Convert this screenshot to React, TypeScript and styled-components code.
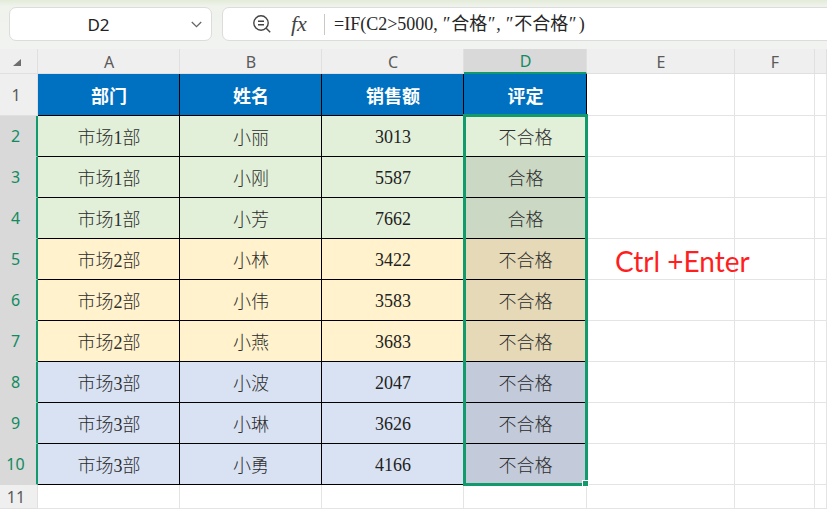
import * as React from 'react';
import { createGlobalStyle, styled } from 'styled-components';

const GlobalStyle = createGlobalStyle`
  html, body {
    margin: 0;
    padding: 0;
    height: 100%;
    overflow: hidden;
    background: #fff;
  }
`;

const Page = styled.div`
  width: 827px;
  height: 509px;
  overflow: hidden;
  display: flex;
  flex-direction: column;
  background: #fff;
`;

const Toolbar = styled.div`
  height: 49px;
  box-sizing: border-box;
  flex: none;
  display: flex;
  gap: 10px;
  padding: 7px 0 0 9px;
  background: linear-gradient(#e3ebd8 0, #eff3ec 6px, #f1f3f0 100%);
`;

const NameBox = styled.div`
  width: 203px;
  height: 34px;
  box-sizing: border-box;
  flex: none;
  display: flex;
  align-items: center;
  padding: 0 9px 0 0;
  background: #fff;
  border: 1px solid #dcdcdc;
  border-radius: 7px;
`;

const CellName = styled.span`
  flex: 1;
  text-align: center;
  padding-right: 4px;
  font: 400 17px 'Noto Sans', sans-serif;
  color: #222;
`;

const FormulaBox = styled.div`
  flex: 1;
  height: 34px;
  box-sizing: border-box;
  margin-right: -10px;
  display: flex;
  align-items: center;
  padding-left: 29px;
  background: #fff;
  border: 1px solid #dcdcdc;
  border-radius: 7px;
`;

const FxLabel = styled.span`
  margin-left: 19px;
  width: 20px;
  font: italic 400 22px 'Liberation Serif', serif;
  color: #444;
`;

const Divider = styled.span`
  width: 1px;
  height: 21px;
  margin: 0 9px 0 13px;
  background: #c8c8c8;
`;

const FormulaText = styled.span`
  font: 400 18px 'Liberation Serif', 'Noto Sans CJK SC', serif;
  color: #262626;
  white-space: nowrap;
  position: relative;
  top: -2px;
`;

const HalfWidth = styled.span`
  display: inline-block;
  width: 9px;
  text-align: center;
`;

const Comma = styled(HalfWidth)`
  text-align: left;
`;

const Sheet = styled.div`
  position: relative;
  display: grid;
  grid-template-columns: 38px 142px 142px 142px 123px 148px 80px 12px;
  grid-template-rows: 25px 42px repeat(9, 41px) 24px;
`;

const ColumnHead = styled.div<{ $active?: boolean }>`
  box-sizing: border-box;
  display: flex;
  align-items: center;
  justify-content: center;
  padding: 1px 0 0 1px;
  font: 400 16px 'Noto Sans', sans-serif;
  background: ${(p) => (p.$active ? '#d9d9d9' : '#efefef')};
  color: ${(p) => (p.$active ? '#128a60' : '#5a5a5a')};
  border-right: 1px solid #e0e0e0;
  border-bottom: ${(p) => (p.$active ? '2px solid #119a6c' : '1px solid #e0e0e0')};
`;

const Corner = styled(ColumnHead)`
  padding: 3px 0 0 0;
  justify-content: flex-start;
`;

const CornerMark = styled.span`
  margin-left: 13px;
  width: 0;
  height: 0;
  border-style: solid;
  border-width: 0 0 7px 8px;
  border-color: transparent transparent #6e6e6e transparent;
`;

const RowHead = styled.div<{ $active?: boolean }>`
  box-sizing: border-box;
  display: flex;
  align-items: center;
  justify-content: center;
  padding-right: 5px;
  font: 400 16px 'Noto Sans', sans-serif;
  background: ${(p) => (p.$active ? '#d9d9d9' : '#efefef')};
  color: ${(p) => (p.$active ? '#128a60' : '#5a5a5a')};
  border-right: ${(p) => (p.$active ? '2px solid #119a6c' : '1px solid #e0e0e0')};
  border-bottom: 1px solid ${(p) => (p.$active ? '#d9d9d9' : '#e0e0e0')};
`;

const Blank = styled.div`
  box-sizing: border-box;
  background: #fff;
  border-right: 1px solid #e4e4e4;
  border-bottom: 1px solid #e4e4e4;
`;

const Cell = styled.div<{ $bg: string }>`
  box-sizing: border-box;
  display: flex;
  align-items: center;
  justify-content: center;
  padding-left: 1px;
  font: 300 18px 'Liberation Serif', 'Noto Sans CJK SC', serif;
  color: #2c2c2c;
  background: ${(p) => p.$bg};
  border-right: 1px solid #000;
  border-bottom: 1px solid #000;
`;

const NumberCell = styled(Cell)`
  padding-top: 3px;
  color: #222;
`;

const HeaderCell = styled(Cell)`
  font: 700 18px 'Liberation Serif', 'Noto Sans CJK SC', serif;
  color: #fff;
`;

const Note = styled.div`
  position: absolute;
  left: 615px;
  top: 195px;
  font: 400 28px 'Lato', sans-serif;
  color: #ff1f1f;
  white-space: nowrap;
`;

const Selection = styled.div`
  position: absolute;
  left: 463px;
  top: 65px;
  width: 125px;
  height: 372px;
  box-sizing: border-box;
  border: 3px solid #119a6c;
  pointer-events: none;
`;

const FillHandle = styled.div`
  position: absolute;
  right: -4px;
  bottom: -4px;
  width: 7px;
  height: 7px;
  box-sizing: border-box;
  background: #119a6c;
  border: 1px solid #fff;
`;

const rows = [
  ['市场1部', '小丽', '3013', '不合格'],
  ['市场1部', '小刚', '5587', '合格'],
  ['市场1部', '小芳', '7662', '合格'],
  ['市场2部', '小林', '3422', '不合格'],
  ['市场2部', '小伟', '3583', '不合格'],
  ['市场2部', '小燕', '3683', '不合格'],
  ['市场3部', '小波', '2047', '不合格'],
  ['市场3部', '小琳', '3626', '不合格'],
  ['市场3部', '小勇', '4166', '不合格'],
];

const tints = [
  { base: '#e2f0d9', selected: '#cbd8c3' },
  { base: '#fff2cc', selected: '#e5d9b7' },
  { base: '#d9e2f3', selected: '#c3cbda' },
];

const LookupIcon = () => (
  <svg width="20" height="20" viewBox="0 0 20 20" fill="none" stroke="#444" strokeWidth="1.4">
    <circle cx="9" cy="9" r="7.2" />
    <path d="M6 7.2h6M6 10.8h6M14.2 14.2l4 4" />
  </svg>
);

const Chevron = () => (
  <svg width="11" height="7" viewBox="0 0 11 7" fill="none" stroke="#666" strokeWidth="1.3">
    <path d="M.8 1l4.7 4.6L10.2 1" />
  </svg>
);

export default function App() {
  return (
    <Page>
      <GlobalStyle />
      <Toolbar>
        <NameBox>
          <CellName>D2</CellName>
          <Chevron />
        </NameBox>
        <FormulaBox>
          <LookupIcon />
          <FxLabel>fx</FxLabel>
          <Divider />
          <FormulaText>
            =IF(C2&gt;5000<Comma>,</Comma>
            <HalfWidth>″</HalfWidth>合格<HalfWidth>″</HalfWidth>
            <Comma>,</Comma>
            <HalfWidth>″</HalfWidth>不合格<HalfWidth>″</HalfWidth>
            <HalfWidth>)</HalfWidth>
          </FormulaText>
        </FormulaBox>
      </Toolbar>
      <Sheet>
        <Corner>
          <CornerMark />
        </Corner>
        {['A', 'B', 'C', 'D', 'E', 'F', ''].map((c) => (
          <ColumnHead key={c} $active={c === 'D'}>
            {c}
          </ColumnHead>
        ))}

        <RowHead>1</RowHead>
        {['部门', '姓名', '销售额', '评定'].map((t) => (
          <HeaderCell key={t} $bg="#0070c0">
            {t}
          </HeaderCell>
        ))}
        <Blank />
        <Blank />
        <Blank />

        {rows.map((row, i) => {
          const tint = tints[Math.floor(i / 3)];
          return (
            <React.Fragment key={i}>
              <RowHead $active>{i + 2}</RowHead>
              <Cell $bg={tint.base}>{row[0]}</Cell>
              <Cell $bg={tint.base}>{row[1]}</Cell>
              <NumberCell $bg={tint.base}>{row[2]}</NumberCell>
              <Cell $bg={i === 0 ? tint.base : tint.selected}>{row[3]}</Cell>
              <Blank />
              <Blank />
              <Blank />
            </React.Fragment>
          );
        })}

        <RowHead>11</RowHead>
        {Array.from({ length: 7 }, (_, i) => (
          <Blank key={i} />
        ))}

        <Note>Ctrl +Enter</Note>
        <Selection>
          <FillHandle />
        </Selection>
      </Sheet>
    </Page>
  );
}
